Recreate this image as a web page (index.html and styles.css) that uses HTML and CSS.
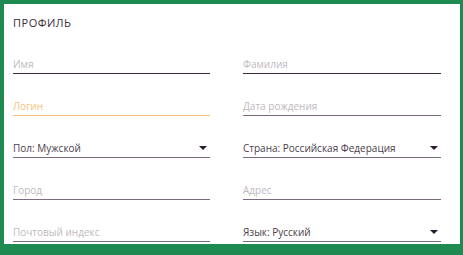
FILE: index.html
```html
<!DOCTYPE html>
<html lang="ru">
<head>
  <meta charset="UTF-8" />
  <title>Профиль</title>
  <link rel="stylesheet" href="styles.css">
</head>
<body>
  <div class="frame">
    <div class="card">
      <h2>ПРОФИЛЬ</h2>

      <div class="fields">
        <div class="field"><span class="placeholder">Имя</span></div>
        <div class="field"><span class="placeholder">Фамилия</span></div>

        <div class="field focused"><span class="placeholder">Логин</span></div>
        <div class="field soft"><span class="placeholder">Дата рождения</span></div>

        <div class="field select soft"><span>Пол: Мужской</span><i class="arrow"></i></div>
        <div class="field select soft"><span>Страна: Российская Федерация</span><i class="arrow"></i></div>

        <div class="field soft"><span class="placeholder">Город</span></div>
        <div class="field soft"><span class="placeholder">Адрес</span></div>

        <div class="field soft"><span class="placeholder">Почтовый индекс</span></div>
        <div class="field select soft"><span>Язык: Русский</span><i class="arrow"></i></div>
      </div>
    </div>
  </div>
</body>
</html>
```

FILE: styles.css
```css
body {
  margin: 0;
  padding: 0;
  font-family: 'Open Sans', 'Noto Sans', sans-serif;
  background: #1e8a52;
}

.frame {
  width: 463px;
  height: 255px;
  box-sizing: border-box;
  padding: 4px 3px 11px 4px;
  background: #1e8a52;
}

.card {
  background: white;
  height: 100%;
  box-sizing: border-box;
  padding: 12px 19px 0 9px;
  color: #3b2c3c;
}

h2 {
  margin: 0;
  font-size: 11px;
  font-weight: 400;
  letter-spacing: 0.5px;
  line-height: 14px;
  color: #3b2c3c;
}

.fields {
  display: grid;
  grid-template-columns: 197px 198px;
  column-gap: 33px;
  grid-auto-rows: 42px;
  margin-top: 2px;
}

.field {
  display: flex;
  align-items: flex-end;
  justify-content: space-between;
  border-bottom: 1px solid #3b2c3c;
  font-size: 10px;
  line-height: 14px;
  padding-bottom: 2px;
  color: #4a3c4a;
}

.field.soft {
  border-bottom-color: #7d6a7d;
}

.field.focused {
  border-bottom-color: #f2c47c;
}

.placeholder {
  color: #c0b9c0;
}

.focused .placeholder {
  color: #f2c47c;
}

.arrow {
  width: 0;
  height: 0;
  border-left: 4px solid transparent;
  border-right: 4px solid transparent;
  border-top: 4px solid #2a1a2e;
  margin: 0 3px 5px 0;
}
```
